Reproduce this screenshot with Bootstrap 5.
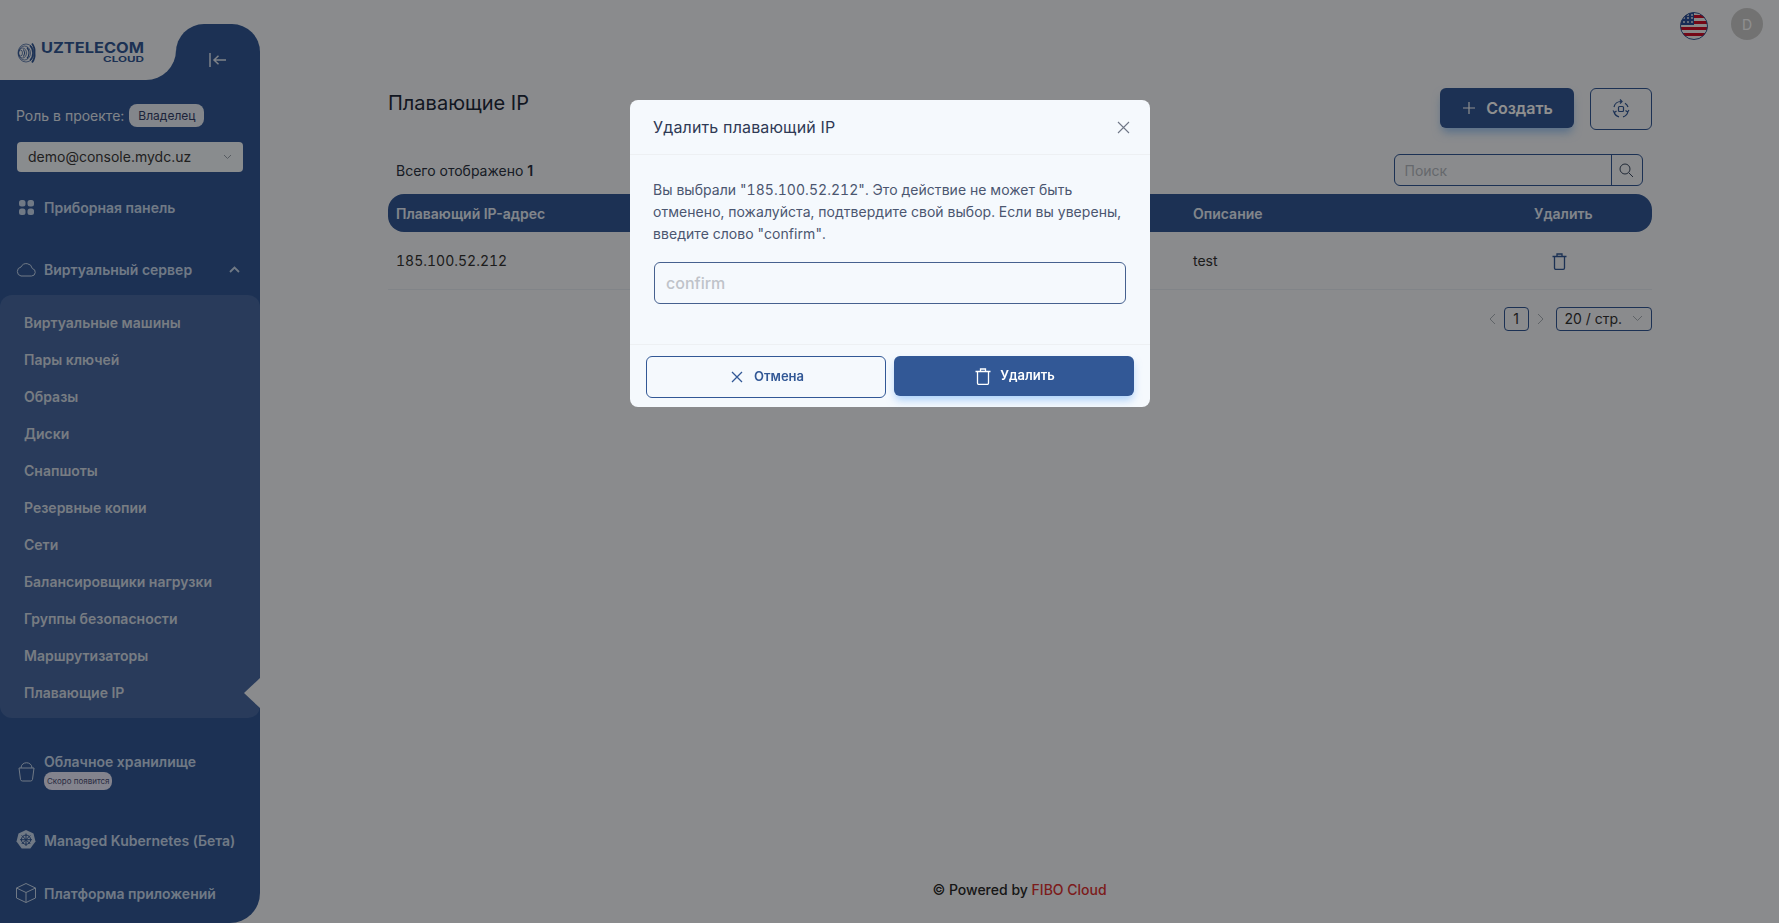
<!DOCTYPE html>
<html lang="ru">
<head>
<meta charset="utf-8">
<title>Плавающие IP</title>
<link href="https://cdn.jsdelivr.net/npm/bootstrap@5.3.0/dist/css/bootstrap.min.css" rel="stylesheet">
<style>
html,body{height:100%;}
body{background:#f6f8fb;font-family:Inter,"Noto Sans",sans-serif;font-size:14px;color:#2b3342;overflow:hidden;}
.shell{height:100vh;}
.side{width:260px;flex:0 0 260px;color:#c8d8ee;}
.side-top{height:80px;background:linear-gradient(#325896,#325896) no-repeat left bottom/176px 30px;}
.logo-cell{width:176px;background:#f6f8fb;border-bottom-right-radius:30px;padding:40px 0 0 16px;}
.toggle-cell{margin-top:24px;background:#325896;border-radius:28px 28px 0 0;padding:28px 0 0 33px;color:#dfe7f2;line-height:0;}
.side-body{background:#325896;border-bottom-right-radius:30px;}
.role-row{padding:24px 16px 0;height:47px;color:#e4ebf4;}
.role-chip{background:#e9eff8;color:#33416a;font-size:12px;font-weight:400;border-radius:8px;padding:0 9px;height:23px;line-height:23px;margin-left:5px;}
.proj-select{margin:15px 17px 0;height:30px;padding:0 11px;font-size:14px;line-height:28px;border-radius:4px;border:0;background-color:#f5f9fd;color:#3a3a3a;--bs-form-select-bg-img:none;background-image:none;position:relative;}
.sel-caret{color:#9aa3ae;}
.nav-row{height:40px;padding:0 16px;font-weight:600;}
.nav-label{margin-left:8px;}
.nav-ico{width:20px;flex:0 0 20px;}
.mt-a{margin-top:15px;}.mt-b{margin-top:22px;}.mt-c{margin-top:30px;}.mt-d{margin-top:13px;}
.sub-panel{margin-top:6px;background:#496aa3;border-radius:12px;padding:9px 0 7px;position:relative;}
.sub-item{height:37px;line-height:37px;padding-left:24px;font-weight:600;color:#d5dde8;position:relative;}
.sub-item.on::after{content:"";position:absolute;right:0;top:3.5px;border-style:solid;border-width:15px 16px 15px 0;border-color:transparent #f6f8fb transparent transparent;}
.store-row{margin-top:35px;padding:0 16px;font-weight:600;height:37px;}
.soon{background:#eaeafc;color:#4a4f75;font-size:8px;font-weight:400;height:18px;line-height:18px;border-radius:8px;padding:0 3px;display:inline-block;width:68px;white-space:nowrap;margin-top:1px;}
.store-title{line-height:18px;}
.top-bar{height:48px;padding:8px 16px 0 0;gap:23px;}
.avatar{width:32px;height:32px;border-radius:50%;background:#ccc;color:#fff;}
.content{padding:40px 127.5px 0 128px;}
.page-title{font-size:20px;font-weight:400;line-height:26px;margin:2px 0 0;color:#1f2a3c;}
.btn-make{width:134px;height:40px;background:#325896;border:0;border-radius:6px;color:#fff;font-weight:600;font-size:16px;gap:11px;padding:0 0 0 3px;box-shadow:0 6px 10px -2px rgba(90,160,240,.6);}
.btn-re{width:62px;height:42px;border:1px solid #325896;border-radius:6px;background:transparent;color:#325896;margin-left:16px;padding:0;}
.count-row{margin-top:24px;height:32px;padding-left:8px;}
.count-row b{font-weight:600;}
.search-box{width:249px;height:32px;margin-right:9px;border:1px solid #325896;border-radius:6px;}
.search-box .form-control{border:0;background:transparent;height:30px;font-size:14px;padding:0 10px;border-radius:6px 0 0 6px;box-shadow:none;min-height:0;}
.search-box .form-control::placeholder{color:#b5bac2;}
.search-btn{width:31px;border-left:1px solid #325896;color:#3b4a63;}
.ip-table{margin:8px 0 0;table-layout:fixed;width:100%;--bs-table-bg:transparent;}
.ip-table th{background:#325896;color:#e7eef8;font-weight:600;height:38px;padding:0 8px;border:0;vertical-align:middle;}
.ip-table th:first-child{border-radius:16px 0 0 16px;}
.ip-table th:last-child{border-radius:0 16px 16px 0;}
.ip-table td{height:57px;padding:1px 8px 0;vertical-align:middle;border-bottom:1px solid #e6ebf2;color:#333;font-variant-numeric:tabular-nums;}
.c-one{width:797px;}.c-desc{width:341px;}
.ip-table td.trash-cell{padding:0 0 0 26px;}
.pager{margin-top:17px;height:24px;color:#333;}
.pg-arrow{color:#aab0b8;width:24px;}
.pg-num{width:25px;height:24px;border:1px solid #325896;border-radius:4px;}
.pg-size{width:96px;height:24px;border:1px solid #325896;border-radius:4px;margin-left:3px;padding:0 8px;}
.foot-line{padding-bottom:23px;font-weight:500;line-height:21px;color:#2a2a2a;}
.foot-line span{color:#d33;}
.modal-backdrop.show{opacity:.44;}
.del-dialog{max-width:520px;width:520px;margin:100px 0 0 630px;}
.del-dialog .modal-content{background:#f5f9fd;border:0;border-radius:8px;}
.del-dialog .modal-header{height:55px;padding:0 20px 0 23px;border-bottom:1px solid #edf0f3;}
.del-dialog .modal-title{font-size:16px;font-weight:400;color:#2f3a55;letter-spacing:.15px;}
.del-dialog .modal-body{height:189px;padding:24px 24px 0 23px;flex:none;}
.del-text{font-size:14px;line-height:22px;color:#4b5670;margin:0;letter-spacing:.05px;font-variant-numeric:tabular-nums;}
.del-input{height:42px;margin-top:17px;margin-left:1px;width:472px;border:1px solid #46618f;border-radius:6px;background:transparent;font-size:16px;padding:0 11px;}
.del-input::placeholder{color:#bfc3c9;font-weight:500;}
.del-dialog .modal-footer{height:63px;padding:11px 16px 0;border-top:1px solid #edf0f3;align-items:flex-start;justify-content:flex-start;gap:8px;flex-wrap:nowrap;}
.del-dialog .modal-footer .btn{margin:0;width:240px;font-size:13px;font-weight:600;display:flex;align-items:center;justify-content:center;}
.del-dialog .modal-footer .btn-no{height:42px;border:1px solid #325896;border-radius:6px;background:transparent;color:#325896;gap:11px;padding:0 0 0 3px;}
.del-dialog .modal-footer .btn-yes{height:40px;border:0;border-radius:6px;background:#325896;color:#fff;gap:9px;padding:0 0 0 2px;box-shadow:0 5px 9px -1px rgba(110,175,250,.55);}
</style>
</head>
<body>
<div class="d-flex shell">
  <aside class="side d-flex flex-column">
    <div class="side-top d-flex">
      <div class="logo-cell">
        <svg class="d-block" width="140" height="26" viewBox="0 0 140 26" fill="none">
          <g stroke="#325896" fill="none" stroke-width=".7">
            <ellipse cx="4.500" cy="13" rx="2" ry="3"/>
            <ellipse cx="6.500" cy="13" rx="4" ry="5"/>
            <ellipse cx="8.500" cy="13" rx="6" ry="7"/>
            <ellipse cx="10" cy="13" rx="8" ry="9"/>
          </g>
          <g stroke="#325896" fill="none">
            <path d="M7.500 9.500a6 6 0 0 1 0 7" stroke-width="1"/>
            <path d="M11 7.500a9 9 0 0 1 0 11" stroke-width="1.300"/>
            <path d="M14 5.500a11 11 0 0 1 0 15" stroke-width="1.500"/>
            <path d="M16 3.500a13 13 0 0 1 2.500 9.500 13 13 0 0 1-2.500 9.500" stroke-width="1.800"/>
          </g>
          <text x="25" y="13" font-family="Inter,sans-serif" font-size="14.500" font-weight="700" fill="#325896" textLength="103" lengthAdjust="spacingAndGlyphs">UZTELECOM</text>
          <text x="87" y="21.500" font-family="Inter,sans-serif" font-size="7.500" font-weight="700" fill="#325896" textLength="41" lengthAdjust="spacingAndGlyphs">CLOUD</text>
        </svg>
      </div>
      <div class="toggle-cell flex-grow-1">
        <svg width="18" height="16" viewBox="0 0 18 16" fill="none" stroke="currentColor" stroke-width="1.500"><path d="M1 1v14"/><path d="M17 8H5M9.500 3.800 5 8l4.500 4.200"/></svg>
      </div>
    </div>
    <div class="side-body flex-grow-1">
      <div class="role-row d-flex align-items-center pt-4"><span>Роль в проекте:</span><span class="role-chip">Владелец</span></div>
      <div class="proj-select d-flex align-items-center justify-content-between"><span>demo@console.mydc.uz</span>
        <svg class="sel-caret" width="9" height="6" viewBox="0 0 9 6" fill="none" stroke="currentColor"><path d="M1 1l3.500 3.500L8 1"/></svg></div>

      <div class="nav-row d-flex align-items-center mt-a">
        <span class="nav-ico d-flex justify-content-center"><svg width="15" height="15" viewBox="0 0 15 15" fill="currentColor"><rect x="0" y="0" width="6.500" height="6.500" rx="2.500"/><rect x="8.500" y="0" width="6.500" height="6.500" rx="2.500"/><rect x="0" y="8.500" width="6.500" height="6.500" rx="2.500"/><rect x="8.500" y="8.500" width="6.500" height="6.500" rx="2.500"/></svg></span>
        <span class="nav-label">Приборная панель</span>
      </div>

      <div class="nav-row d-flex align-items-center mt-b">
        <span class="nav-ico d-flex"><svg width="20" height="15" viewBox="0 0 20 15" fill="none" stroke="currentColor" stroke-width="1"><path d="M5 14h10.500a3.800 3.800 0 0 0 .8-7.500A6 6 0 0 0 5 5a4.600 4.600 0 0 0 0 9z"/></svg></span>
        <span class="nav-label flex-grow-1">Виртуальный сервер</span>
        <svg class="me-1" width="11" height="7" viewBox="0 0 11 7" fill="none" stroke="currentColor" stroke-width="1.800"><path d="M1 6l4.500-4.500L10 6"/></svg>
      </div>

      <div class="sub-panel">
        <div class="sub-item">Виртуальные машины</div>
        <div class="sub-item">Пары ключей</div>
        <div class="sub-item">Образы</div>
        <div class="sub-item">Диски</div>
        <div class="sub-item">Снапшоты</div>
        <div class="sub-item">Резервные копии</div>
        <div class="sub-item">Сети</div>
        <div class="sub-item">Балансировщики нагрузки</div>
        <div class="sub-item">Группы безопасности</div>
        <div class="sub-item">Маршрутизаторы</div>
        <div class="sub-item on">Плавающие IP</div>
      </div>

      <div class="store-row d-flex align-items-center">
        <span class="nav-ico d-flex justify-content-center"><svg width="17" height="21" viewBox="0 0 17 21" fill="none" stroke="currentColor" stroke-width="1"><path d="M3 7c0-7 11-7 11 0"/><path d="M1 7h15l-1.500 11.500a2 2 0 0 1-2 1.500h-8a2 2 0 0 1-2-1.500z" /></svg></span>
        <div class="nav-label">
          <div class="store-title">Облачное хранилище</div>
          <span class="soon d-block">Скоро появится</span>
        </div>
      </div>

      <div class="nav-row d-flex align-items-center mt-c">
        <span class="nav-ico d-flex"><svg width="20" height="20" viewBox="0 0 20 20"><path fill="currentColor" d="M10 0l7.500 3.600 2 8-5.200 6.800H5.700L.5 11.600l2-8z"/><g fill="none" stroke="#325896" stroke-width="1"><circle cx="10" cy="9.700" r="4.600"/><path d="M10 3.500v12.500M4 9.700h12M5.700 5.400l8.600 8.600M14.300 5.400l-8.600 8.600"/></g></svg></span>
        <span class="nav-label">Managed Kubernetes (Бета)</span>
      </div>

      <div class="nav-row d-flex align-items-center mt-d">
        <span class="nav-ico d-flex"><svg width="20" height="20" viewBox="0 0 20 20" fill="none" stroke="currentColor" stroke-width="1"><path d="M10 .5l9.500 4.500v10L10 19.500.5 15V5z"/><path d="M.5 5 10 9.500 19.500 5M10 9.500v10"/></svg></span>
        <span class="nav-label">Платформа приложений</span>
      </div>
    </div>
  </aside>

  <main class="flex-grow-1 d-flex flex-column">
    <div class="top-bar d-flex justify-content-end align-items-start">
      <svg class="mt-1 flag-ico" width="28" height="28" viewBox="0 0 28 28">
        <defs><clipPath id="fc"><circle cx="14" cy="14" r="13.500"/></clipPath></defs>
        <g clip-path="url(#fc)">
          <rect width="28" height="28" fill="#f4f4f4"/>
          <g fill="#d00f2a"><rect y="3" width="28" height="3"/><rect y="9" width="28" height="3"/><rect y="15" width="28" height="3"/><rect y="21" width="28" height="3"/></g>
          <rect width="14" height="13" fill="#2a4f9c"/>
          <g fill="#f4f4f4"><circle cx="8" cy="3" r=".9"/><circle cx="12" cy="3" r=".9"/><circle cx="4" cy="6" r=".9"/><circle cx="8" cy="6" r=".9"/><circle cx="12" cy="6" r=".9"/><circle cx="4" cy="10" r=".9"/><circle cx="8" cy="10" r=".9"/><circle cx="12" cy="10" r=".9"/></g>
        </g>
        <circle cx="14" cy="14" r="13.500" fill="none" stroke="#325896" stroke-width="1"/>
      </svg>
      <div class="avatar d-flex align-items-center justify-content-center">D</div>
    </div>

    <div class="content">
      <div class="d-flex justify-content-between align-items-start">
        <h1 class="page-title">Плавающие IP</h1>
        <div class="d-flex align-items-start">
          <button class="btn btn-make d-flex align-items-center justify-content-center" type="button">
            <svg width="12" height="12" viewBox="0 0 12 12" fill="none" stroke="currentColor" stroke-width="1.200"><path d="M6 0v12M0 6h12"/></svg>
            <span>Создать</span>
          </button>
          <button class="btn btn-re d-flex align-items-center justify-content-center" type="button">
            <svg width="18" height="20" viewBox="0 0 18 20" fill="none" stroke="currentColor" stroke-width="1.200"><rect x="6.500" y="7.500" width="5" height="5" rx="1"/><path d="M2 8a7 7 0 0 1 7-5.500M16 8a7 7 0 0 0-3-3.800M2 13a7 7 0 0 0 5 4.800M16 12.500a7 7 0 0 1-5 5.300"/><path d="M8 .5l2 2-2 2M1 11.500l1.500 2 2-1.500M17 11l-1.500 2-2-1.500" /></svg>
          </button>
        </div>
      </div>

      <div class="count-row d-flex justify-content-between align-items-center">
        <span>Всего отображено <b>1</b></span>
        <div class="search-box d-flex">
          <input class="form-control" type="text" placeholder="Поиск">
          <span class="search-btn d-flex align-items-center justify-content-center flex-shrink-0">
            <svg width="15" height="15" viewBox="0 0 15 15" fill="none" stroke="currentColor" stroke-width="1"><circle cx="6" cy="6" r="5"/><path d="M9.800 9.800 14 14"/></svg>
          </span>
        </div>
      </div>

      <table class="table ip-table">
        <thead>
          <tr><th class="c-one">Плавающий IP-адрес</th><th class="c-desc">Описание</th><th>Удалить</th></tr>
        </thead>
        <tbody>
          <tr>
            <td>185.100.52.212</td><td>test</td>
            <td class="trash-cell"><svg width="15" height="17" viewBox="0 0 15 17" fill="none" stroke="#325896" stroke-width="1.300"><path d="M.5 3.500h14M5 3.500V1h5v2.500M2.500 3.500v11.500a1.300 1.300 0 0 0 1.300 1.300h7.400a1.300 1.300 0 0 0 1.300-1.300V3.500"/></svg></td>
          </tr>
        </tbody>
      </table>

      <div class="pager d-flex justify-content-end align-items-center">
        <span class="pg-arrow d-flex justify-content-center"><svg width="8" height="12" viewBox="0 0 8 12" fill="none" stroke="currentColor"><path d="M7 1 2 6l5 5"/></svg></span>
        <span class="pg-num d-flex align-items-center justify-content-center">1</span>
        <span class="pg-arrow d-flex justify-content-center"><svg width="8" height="12" viewBox="0 0 8 12" fill="none" stroke="currentColor"><path d="M1 1l5 5-5 5"/></svg></span>
        <span class="pg-size d-flex align-items-center justify-content-between"><span>20 / стр.</span><svg width="11" height="7" viewBox="0 0 11 7" fill="none" stroke="#aab0b8"><path d="M1 1l4.500 4.500L10 1"/></svg></span>
      </div>
    </div>

    <div class="foot-line mt-auto text-center">© Powered by <span>FIBO Cloud</span></div>
  </main>
</div>

<div class="modal-backdrop show"></div>
<div class="modal d-block" tabindex="-1" role="dialog">
  <div class="modal-dialog del-dialog">
    <div class="modal-content">
      <div class="modal-header">
        <h5 class="modal-title">Удалить плавающий IP</h5>
        <svg width="13" height="13" viewBox="0 0 13 13" fill="none" stroke="#6f7787" stroke-width="1.100"><path d="M1 1l11 11M12 1 1 12"/></svg>
      </div>
      <div class="modal-body">
        <p class="del-text">Вы выбрали "185.100.52.212". Это действие не может быть отменено, пожалуйста, подтвердите свой выбор. Если вы уверены, введите слово "confirm".</p>
        <input class="form-control del-input" type="text" placeholder="confirm">
      </div>
      <div class="modal-footer">
        <button class="btn btn-no" type="button">
          <svg width="12" height="12" viewBox="0 0 12 12" fill="none" stroke="currentColor" stroke-width="1.300"><path d="M1 1l10 10M11 1 1 11"/></svg>
          <span>Отмена</span>
        </button>
        <button class="btn btn-yes" type="button">
          <svg width="16" height="17" viewBox="0 0 16 17" fill="none" stroke="currentColor" stroke-width="1.300"><path d="M.5 3.500h15M5.500 3.500V1h5v2.500M2.500 3.500v11.500a1.500 1.500 0 0 0 1.500 1.500h8a1.500 1.500 0 0 0 1.500-1.500V3.500"/></svg>
          <span>Удалить</span>
        </button>
      </div>
    </div>
  </div>
</div>
<script src="https://cdn.jsdelivr.net/npm/bootstrap@5.3.0/dist/js/bootstrap.bundle.min.js"></script>
</body>
</html>
